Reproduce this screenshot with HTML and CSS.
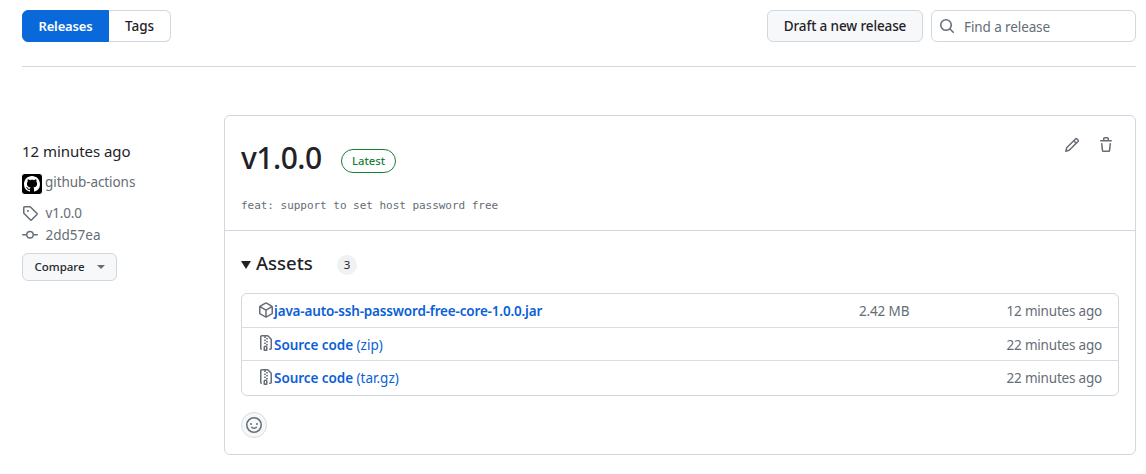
FILE: index.html
```html
<!DOCTYPE html>
<html lang="en">
<head>
<meta charset="utf-8">
<title>Releases</title>
<link rel="stylesheet" href="styles.css">
</head>
<body>
<header class="toolbar">
  <nav class="tabs"><a class="tab tab-active"><span class="t-releases">Releases</span></a><a class="tab"><span class="t-tags">Tags</span></a></nav>
  <div class="tools">
    <button class="btn draft"><span class="t-draft">Draft a new release</span></button>
    <div class="search">
      <svg class="icon" viewBox="0 0 16 16"><path d="M10.68 11.74a6 6 0 0 1-7.922-8.982 6 6 0 0 1 8.982 7.922l3.04 3.04a.749.749 0 0 1-.326 1.275.749.749 0 0 1-.734-.215ZM11.5 7a4.499 4.499 0 1 0-8.997 0A4.499 4.499 0 0 0 11.5 7Z"/></svg>
      <span class="t-find">Find a release</span>
    </div>
  </div>
</header>
<main class="release">
  <aside class="meta">
    <div class="date"><span class="t-date">12 minutes ago</span></div>
    <div class="meta-row author">
      <svg class="avatar" viewBox="0 0 20 20"><rect width="20" height="20" rx="3" fill="#000"/><path transform="translate(2 2)" fill="#fff" d="M8 0c4.42 0 8 3.58 8 8a8.013 8.013 0 0 1-5.45 7.59c-.4.08-.55-.17-.55-.38 0-.27.01-1.13.01-2.2 0-.75-.25-1.23-.54-1.48 1.78-.2 3.65-.88 3.65-3.95 0-.88-.31-1.59-.82-2.15.08-.2.36-1.02-.08-2.12 0 0-.67-.22-2.2.82-.64-.18-1.32-.27-2-.27-.68 0-1.36.09-2 .27-1.53-1.03-2.2-.82-2.2-.82-.44 1.1-.16 1.92-.08 2.12-.51.56-.82 1.28-.82 2.15 0 3.06 1.86 3.75 3.64 3.95-.23.2-.44.55-.51 1.07-.46.21-1.61.55-2.33-.66-.15-.24-.6-.83-1.23-.82-.67.01-.27.38.01.53.34.19.73.9.82 1.13.16.45.68 1.31 2.69.94 0 .67.01 1.3.01 1.49 0 .21-.15.45-.55.38A7.995 7.995 0 0 1 0 8c0-4.42 3.58-8 8-8Z"/></svg>
      <span class="t-author">github-actions</span>
    </div>
    <div class="meta-row tag">
      <svg class="icon" viewBox="0 0 16 16"><path d="M1 7.775V2.75C1 1.784 1.784 1 2.75 1h5.025c.464 0 .91.184 1.238.513l6.25 6.25a1.75 1.75 0 0 1 0 2.474l-5.026 5.026a1.75 1.75 0 0 1-2.474 0l-6.25-6.25A1.752 1.752 0 0 1 1 7.775Zm1.5 0c0 .066.026.13.073.177l6.25 6.25a.25.25 0 0 0 .354 0l5.025-5.025a.25.25 0 0 0 0-.354l-6.25-6.25a.25.25 0 0 0-.177-.073H2.75a.25.25 0 0 0-.25.25ZM6 5a1 1 0 1 1 0 2 1 1 0 0 1 0-2Z"/></svg>
      <span class="t-tag">v1.0.0</span>
    </div>
    <div class="meta-row commit">
      <svg class="icon" viewBox="0 0 16 16"><path d="M11.93 8.5a4.002 4.002 0 0 1-7.86 0H.75a.75.75 0 0 1 0-1.5h3.32a4.002 4.002 0 0 1 7.86 0h3.32a.75.75 0 0 1 0 1.5Zm-1.43-.75a2.5 2.5 0 1 0-5 0 2.5 2.5 0 0 0 5 0Z"/></svg>
      <span class="t-commit">2dd57ea</span>
    </div>
    <button class="btn compare"><span class="t-compare">Compare</span><i class="caret"></i></button>
  </aside>
  <section class="card">
    <div class="card-head">
      <div class="title-row">
        <h1><span class="t-title">v1.0.0</span></h1>
        <span class="latest"><span class="t-latest">Latest</span></span>
        <div class="actions">
          <svg class="icon" viewBox="0 0 16 16"><path d="M11.013 1.427a1.75 1.75 0 0 1 2.474 0l1.086 1.086a1.75 1.75 0 0 1 0 2.474l-8.61 8.61c-.21.21-.47.364-.756.445l-3.251.93a.75.75 0 0 1-.927-.928l.929-3.25c.081-.286.235-.547.445-.758l8.61-8.61Zm.176 4.823L9.75 4.81l-6.286 6.287a.253.253 0 0 0-.064.108l-.558 1.953 1.953-.558a.253.253 0 0 0 .108-.064Zm1.238-3.763a.25.25 0 0 0-.354 0L10.811 3.75l1.439 1.44 1.263-1.263a.25.25 0 0 0 0-.354Z"/></svg>
          <svg class="icon" viewBox="0 0 16 16"><path d="M11 1.75V3h2.25a.75.75 0 0 1 0 1.5H2.75a.75.75 0 0 1 0-1.5H5V1.75C5 .784 5.784 0 6.75 0h2.5C10.216 0 11 .784 11 1.75ZM4.496 6.675l.66 6.6a.25.25 0 0 0 .249.225h5.19a.25.25 0 0 0 .249-.225l.66-6.6a.75.75 0 0 1 1.492.149l-.66 6.6A1.748 1.748 0 0 1 10.595 15h-5.19a1.75 1.75 0 0 1-1.741-1.575l-.66-6.6a.75.75 0 1 1 1.492-.15ZM6.5 1.75V3h3V1.75a.25.25 0 0 0-.25-.25h-2.5a.25.25 0 0 0-.25.25Z"/></svg>
        </div>
      </div>
      <p class="notes"><span class="t-notes">feat: support to set host password free</span></p>
    </div>
    <div class="card-body">
      <div class="assets-head"><i class="disclosure"></i><h2><span class="t-assets">Assets</span></h2><span class="counter">3</span></div>
      <ul class="assets">
        <li>
          <svg class="icon" viewBox="0 0 16 16"><path d="m8.878.392 5.25 3.045c.54.314.872.89.872 1.514v6.098a1.75 1.75 0 0 1-.872 1.514l-5.25 3.045a1.75 1.75 0 0 1-1.756 0l-5.25-3.045A1.75 1.75 0 0 1 1 11.049V4.951c0-.624.332-1.201.872-1.514L7.122.392a1.75 1.75 0 0 1 1.756 0ZM7.875 1.69l-4.63 2.685L8 7.133l4.755-2.758-4.63-2.685a.248.248 0 0 0-.25 0ZM2.5 5.677v5.372c0 .09.047.171.125.216l4.625 2.683V8.432Zm6.25 8.271 4.625-2.683a.25.25 0 0 0 .125-.216V5.677L8.75 8.432Z"/></svg>
          <a class="file"><span class="t-jar">java-auto-ssh-password-free-core-1.0.0.jar</span></a>
          <span class="size"><span class="t-size">2.42 MB</span></span><span class="when"><span class="t-when">12 minutes ago</span></span>
        </li>
        <li>
          <svg class="icon" viewBox="0 0 16 16"><path d="M3.5 1.75v11.5c0 .09.048.173.126.217a.75.75 0 0 1-.752 1.298A1.748 1.748 0 0 1 2 13.25V1.75C2 .784 2.784 0 3.75 0h5.586c.464 0 .909.185 1.237.513l2.914 2.914c.329.328.513.773.513 1.237v8.586A1.75 1.75 0 0 1 12.25 15h-.5a.75.75 0 0 1 0-1.5h.5a.25.25 0 0 0 .25-.25V4.664a.25.25 0 0 0-.073-.177L9.513 1.573a.25.25 0 0 0-.177-.073H7.25a.75.75 0 0 1 0 1.5h-.5a.75.75 0 0 1 0-1.5h-3a.25.25 0 0 0-.25.25Zm3.75 8.75h.5c.966 0 1.75.784 1.75 1.75v3a.75.75 0 0 1-.75.75h-2.5a.75.75 0 0 1-.75-.75v-3c0-.966.784-1.75 1.75-1.75ZM6 5.25a.75.75 0 0 1 .75-.75h.5a.75.75 0 0 1 0 1.5h-.5A.75.75 0 0 1 6 5.25Zm.75 2.25h.5a.75.75 0 0 1 0 1.5h-.5a.75.75 0 0 1 0-1.5ZM8 6.75A.75.75 0 0 1 8.75 6h.5a.75.75 0 0 1 0 1.5h-.5A.75.75 0 0 1 8 6.75ZM8.75 3h.5a.75.75 0 0 1 0 1.5h-.5a.75.75 0 0 1 0-1.5ZM8 9.75A.75.75 0 0 1 8.75 9h.5a.75.75 0 0 1 0 1.5h-.5A.75.75 0 0 1 8 9.75Zm-1 2.5v2.25h1v-2.25a.25.25 0 0 0-.25-.25h-.5a.25.25 0 0 0-.25.25Z"/></svg>
          <a class="file"><span class="t-source">Source code</span> <small>(zip)</small></a><span class="when"><span class="t-when">22 minutes ago</span></span>
        </li>
        <li>
          <svg class="icon" viewBox="0 0 16 16"><path d="M3.5 1.75v11.5c0 .09.048.173.126.217a.75.75 0 0 1-.752 1.298A1.748 1.748 0 0 1 2 13.25V1.75C2 .784 2.784 0 3.75 0h5.586c.464 0 .909.185 1.237.513l2.914 2.914c.329.328.513.773.513 1.237v8.586A1.75 1.75 0 0 1 12.25 15h-.5a.75.75 0 0 1 0-1.5h.5a.25.25 0 0 0 .25-.25V4.664a.25.25 0 0 0-.073-.177L9.513 1.573a.25.25 0 0 0-.177-.073H7.25a.75.75 0 0 1 0 1.5h-.5a.75.75 0 0 1 0-1.5h-3a.25.25 0 0 0-.25.25Zm3.75 8.75h.5c.966 0 1.75.784 1.75 1.75v3a.75.75 0 0 1-.75.75h-2.5a.75.75 0 0 1-.75-.75v-3c0-.966.784-1.75 1.75-1.75ZM6 5.25a.75.75 0 0 1 .75-.75h.5a.75.75 0 0 1 0 1.5h-.5A.75.75 0 0 1 6 5.25Zm.75 2.25h.5a.75.75 0 0 1 0 1.5h-.5a.75.75 0 0 1 0-1.5ZM8 6.75A.75.75 0 0 1 8.75 6h.5a.75.75 0 0 1 0 1.5h-.5A.75.75 0 0 1 8 6.75ZM8.75 3h.5a.75.75 0 0 1 0 1.5h-.5a.75.75 0 0 1 0-1.5ZM8 9.75A.75.75 0 0 1 8.75 9h.5a.75.75 0 0 1 0 1.5h-.5A.75.75 0 0 1 8 9.75Zm-1 2.5v2.25h1v-2.25a.25.25 0 0 0-.25-.25h-.5a.25.25 0 0 0-.25.25Z"/></svg>
          <a class="file"><span class="t-source">Source code</span> <small>(tar.gz)</small></a><span class="when"><span class="t-when">22 minutes ago</span></span>
        </li>
      </ul>
      <button class="react"><svg class="icon" viewBox="0 0 16 16"><path d="M8 0a8 8 0 1 1 0 16A8 8 0 0 1 8 0ZM1.5 8a6.5 6.5 0 1 0 13 0 6.5 6.5 0 0 0-13 0Zm3.82 1.636a.75.75 0 0 1 1.038.175l.007.009c.103.118.22.222.35.31.264.178.683.37 1.285.37.602 0 1.02-.192 1.285-.371.13-.088.247-.192.35-.31l.007-.008a.75.75 0 0 1 1.222.87l-.022-.015c.02.013.021.015.021.015v.001l-.001.002-.002.003-.005.007-.014.019a2.066 2.066 0 0 1-.184.213c-.16.166-.338.316-.53.445-.63.418-1.37.638-2.127.629-.946 0-1.652-.308-2.126-.63a3.331 3.331 0 0 1-.715-.657l-.014-.02-.005-.006-.002-.003v-.002h-.001l.613-.432-.614.43a.75.75 0 0 1 .183-1.044ZM12 7a1 1 0 1 1-2 0 1 1 0 0 1 2 0ZM5 8a1 1 0 1 1 0-2 1 1 0 0 1 0 2Z"/></svg></button>
    </div>
  </section>
</main>
</body>
</html>
```
FILE: styles.css
```css
* { box-sizing: border-box; }
body { margin: 0; padding: 10px 10px 0 22px; height: 474px; overflow: hidden; background: #fff; color: #1f2328; font: 13.5px/20px "Noto Sans", "Open Sans", sans-serif; }
h1, h2, p, ul { margin: 0; padding: 0; }
button { font: inherit; color: inherit; }
svg { display: block; flex: none; }
.icon { width: 16px; height: 16px; fill: #656d76; }
.toolbar { display: flex; justify-content: space-between; height: 57px; border-bottom: 1px solid #d0d7de; }
.tabs { display: flex; height: 32px; font-weight: 500; }
.tab { display: flex; align-items: center; justify-content: center; width: 62px; border: 1px solid #d0d7de; border-left: 0; border-radius: 0 6px 6px 0; }
.tab-active { width: 87px; background: #0969da; border: 1px solid #0969da; color: #fff; border-radius: 6px 0 0 6px; font-weight: 600; }
.t-releases { font-size: 13px; letter-spacing: -0.15px; }
.tools { display: flex; gap: 8px; }
.btn { display: flex; align-items: center; justify-content: center; padding: 0; background: #f6f8fa; border: 1px solid #d0d7de; border-radius: 6px; font-weight: 500; white-space: nowrap; }
.draft { width: 156px; height: 32px; letter-spacing: -0.12px; }
.search { display: flex; align-items: center; gap: 9px; width: 205px; height: 32px; padding-left: 7px; border: 1px solid #d0d7de; border-radius: 6px; color: #656d76; letter-spacing: -0.1px; }
.search span { padding-top: 1px; }
.release { display: flex; padding-top: 48px; }
.meta { width: 202px; padding-top: 24px; color: #656d76; }
.date { height: 24px; line-height: 24px; font-size: 15px; letter-spacing: -0.05px; color: #1f2328; }
.meta-row { display: flex; align-items: center; height: 22px; gap: 7px; }
.t-tag, .t-commit { margin-left: 0.5px; }
.author { height: 20px; margin: 11px 0 8px; gap: 3px; align-items: flex-start; line-height: 17px; letter-spacing: -0.08px; }
.t-tag { letter-spacing: -0.15px; }
.avatar { width: 20px; height: 20px; }
.compare { width: 95px; height: 28px; margin-top: 7px; font-size: 11.5px; gap: 12px; color: #24292f; }
.caret { border: 4px solid transparent; border-top-color: #656d76; border-bottom: 0; }
.card { width: 912px; height: 340px; border: 1px solid #d0d7de; border-radius: 6px; }
.card-head { height: 115px; padding: 16px 16px 0; border-bottom: 1px solid #d0d7de; }
.title-row { display: flex; height: 52px; }
h1 { width: 81px; font-size: 30px; line-height: 52px; font-weight: 500; letter-spacing: -0.5px; }
.latest { display: flex; align-items: center; justify-content: center; width: 55px; height: 24px; margin: 17px 0 0 19px; border: 1px solid #1a7f37; border-radius: 12px; color: #1a7f37; font-size: 11.3px; font-weight: 500; }
.actions { display: flex; gap: 18px; margin: 5px 5px 0 auto; }
.notes { margin-top: 12px; color: #656d76; font: 11px/20px "DejaVu Sans Mono", monospace; letter-spacing: -0.03px; white-space: nowrap; }
.card-body { padding: 16px 16px 0; }
.assets-head { display: flex; align-items: center; height: 34px; }
.disclosure { border: 5px solid transparent; border-top: 8px solid #1f2328; border-bottom: 0; margin: 2px 5px 0 0; }
h2 { width: 57px; font-size: 18.5px; line-height: 32px; font-weight: 500; margin-top: -2px; }
.counter { width: 20px; height: 20px; margin: 2px 0 0 24px; border-radius: 10px; background: #eff1f3; font-size: 11.5px; line-height: 20px; text-align: center; }
.assets { height: 103px; margin-top: 12px; border: 1px solid #d0d7de; border-radius: 6px; list-style: none; color: #656d76; }
.assets li { display: flex; align-items: center; height: 33px; padding: 1px 16px 0; border-bottom: 1px solid #d8dee4; }
.assets li:first-child { height: 34px; }
.assets li:last-child { height: 34px; padding-top: 0; border: 0; }
.assets .icon { margin-top: -3px; }
.file { flex: 1; color: #0b5fd7; font-weight: 600; white-space: nowrap; }
.t-jar { letter-spacing: -0.17px; }
.t-source { letter-spacing: -0.05px; }
.file small { font-size: inherit; font-weight: 400; }
.size { width: 110px; letter-spacing: -0.15px; }
.when { width: 133px; text-align: right; letter-spacing: -0.2px; }
.react { display: flex; align-items: center; justify-content: center; width: 26px; height: 26px; padding: 0; margin-top: 16px; background: #f6f8fa; border: 1px solid #d8dee4; border-radius: 50%; }
```
